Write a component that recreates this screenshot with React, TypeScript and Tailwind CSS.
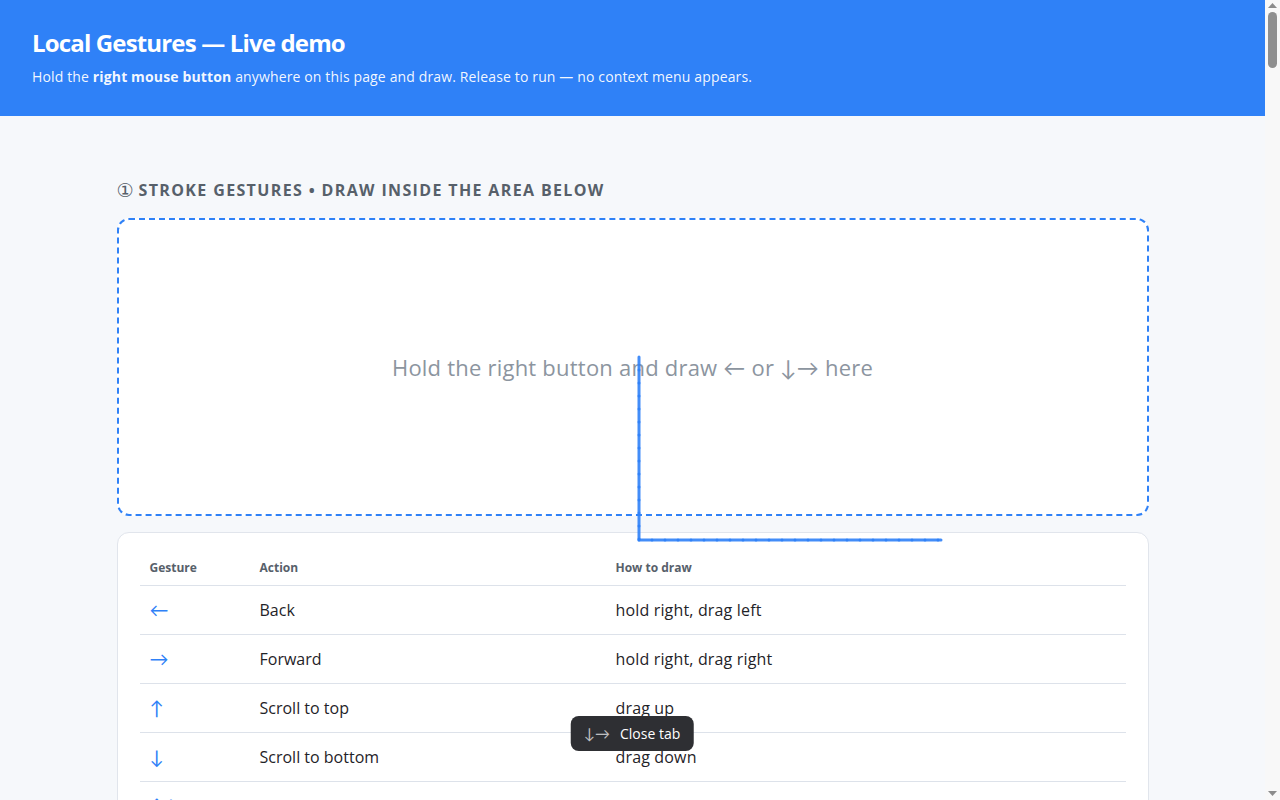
import React from 'react';

const rows = [
  { arrow: '←', action: 'Back', how: 'hold right, drag left' },
  { arrow: '→', action: 'Forward', how: 'hold right, drag right' },
  { arrow: '↑', action: 'Scroll to top', how: 'drag up' },
  { arrow: '↓', action: 'Scroll to bottom', how: 'drag down' },
  { arrow: '↑↓', action: 'Reload', how: 'drag up, then down' },
  { arrow: '↓→', action: 'Close tab', how: 'drag down, then right' },
];

const arrowFont = { fontFamily: 'Lato, "DejaVu Sans", sans-serif' };

const trail: [number, number][] = [];
for (let y = 357; y < 540; y += 13) trail.push([639, y]);
for (let x = 639; x <= 941; x += 13) trail.push([x, 540]);
trail.push([941, 540]);

function ScrollTrack() {
  return (
    <div className="fixed top-0 right-0 flex h-screen w-[15px] flex-col items-center bg-[#f8f8f8]">
      <svg width="9" height="6" viewBox="0 0 9 6" className="mt-[3px]">
        <path d="M4.5 0 9 5H0z" fill="#8c8c8c" />
      </svg>
      <div className="mt-[3px] h-[56px] w-[9px] rounded-full bg-[#8f8f8f]" />
      <div className="flex-1" />
      <svg width="9" height="6" viewBox="0 0 9 6" className="mb-[3px]">
        <path d="M0 0h9L4.5 5z" fill="#8c8c8c" />
      </svg>
    </div>
  );
}

export default function App() {
  return (
    <div
      className="min-h-screen bg-[#f6f8fb] pr-[15px] text-[#1f2328]"
      style={{ fontFamily: '"Open Sans", "Noto Sans", sans-serif' }}
    >
      <header className="bg-[#2f81f7] px-8 pt-[27px] pb-[29px] text-white">
        <h1 className="text-2xl leading-8 font-bold tracking-[-0.035em]">Local Gestures — Live demo</h1>
        <p className="mt-2 text-sm leading-5 text-white/95 tracking-[0.01em]">
          Hold the <b>right mouse button</b> anywhere on this page and draw. Release to run — no context menu appears.
        </p>
      </header>

      <main className="mx-auto max-w-[1032px] pt-[62px] pb-16">
        <h2 className="mb-4 flex h-6 items-center text-base leading-6 font-bold uppercase tracking-[0.085em] text-[#57606a]">
          <span
            className="mr-[5px] text-[19px] leading-none font-normal tracking-normal"
            style={{ fontFamily: '"DejaVu Sans", sans-serif' }}
          >
            ①
          </span>
          Stroke gestures • Draw inside the area below
        </h2>

        <div className="flex h-[298px] items-center justify-center rounded-xl border-2 border-dashed border-[#2f81f7] bg-white">
          <span className="text-[22px] tracking-[0.01em] text-[#8c959f]">
            Hold the right button and draw <span style={arrowFont}>←</span> or <span style={arrowFont}>↓→</span> here
          </span>
        </div>

        <div className="mt-4 rounded-xl border border-[#e1e5ec] bg-white px-[22px] pt-[19px] pb-[22px]">
          <table className="w-full border-collapse text-left">
            <thead>
              <tr className="border-b border-[#dde2ea]">
                <th className="w-[110px] px-2.5 pt-2 pb-[9px] text-xs leading-4 font-bold text-[#57606a]">Gesture</th>
                <th className="w-[356px] px-2.5 pt-2 pb-[9px] text-xs leading-4 font-bold text-[#57606a]">Action</th>
                <th className="px-2.5 pt-2 pb-[9px] text-xs leading-4 font-bold text-[#57606a]">How to draw</th>
              </tr>
            </thead>
            <tbody>
              {rows.map((r) => (
                <tr key={r.action} className="border-b border-[#dde2ea] last:border-b-0">
                  <td className="px-2.5 py-3 text-[19px] leading-6 text-[#2f81f7]" style={arrowFont}>
                    {r.arrow}
                  </td>
                  <td className="px-2.5 py-3 text-base leading-6">{r.action}</td>
                  <td className="px-2.5 py-3 text-base leading-6 tracking-[0.01em]">{r.how}</td>
                </tr>
              ))}
            </tbody>
          </table>
        </div>
      </main>

      <svg className="pointer-events-none fixed inset-0 h-full w-full" fill="none">
        {trail.slice(1).map(([x, y], i) => (
          <line
            key={i}
            x1={trail[i][0]}
            y1={trail[i][1]}
            x2={x}
            y2={y}
            stroke="#2f81f7"
            strokeWidth="3"
            strokeOpacity="0.9"
            strokeLinecap="round"
          />
        ))}
      </svg>

      {/* recognised gesture toast */}
      <div className="fixed bottom-[49px] left-[632px] flex h-[35px] -translate-x-1/2 items-center gap-2.5 rounded-lg bg-[#2e2f33] px-[13px] text-sm text-white">
        <span className="text-[15px] text-white/70" style={arrowFont}>↓→</span>
        <span>Close tab</span>
      </div>

      <ScrollTrack />
    </div>
  );
}
